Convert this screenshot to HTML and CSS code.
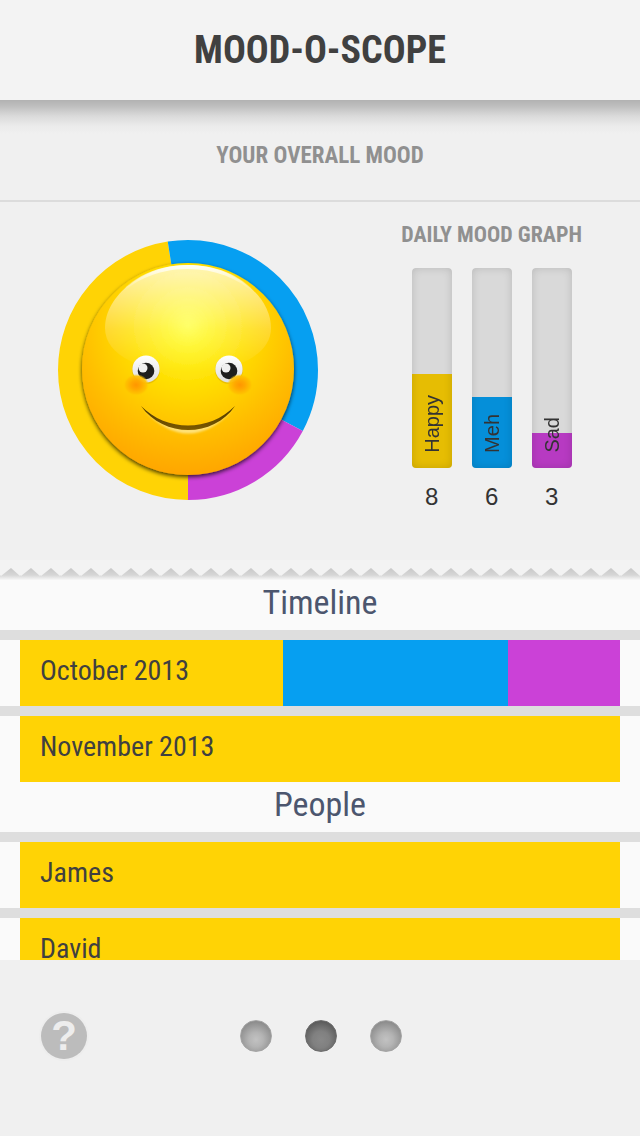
FILE: index.html
```html
<!DOCTYPE html>
<html lang="en">
<head>
  <meta charset="UTF-8">
  <meta name="viewport" content="width=device-width, initial-scale=1.0">
  <title>Mood-O-Scope</title>
  <link rel="stylesheet" href="styles.css">
</head>
<body>
  <header class="header">
    <h1>MOOD-O-SCOPE</h1>
  </header>

  <h2 class="subtitle">YOUR OVERALL MOOD</h2>

  <section class="overview">
    <svg class="mood-ring" viewBox="0 0 260 260" role="img" aria-label="Overall mood: happy">
      <defs>
        <radialGradient id="skin" gradientUnits="userSpaceOnUse" cx="130" cy="86" r="150">
          <stop offset="0" stop-color="#ffff3c"/>
          <stop offset="0.14" stop-color="#fff51e"/>
          <stop offset="0.42" stop-color="#ffdc00"/>
          <stop offset="0.72" stop-color="#ffbe00"/>
          <stop offset="1" stop-color="#ffa500"/>
        </radialGradient>
        <linearGradient id="gloss" x1="0" y1="0" x2="0" y2="1">
          <stop offset="0" stop-color="#fff" stop-opacity="0.72"/>
          <stop offset="0.6" stop-color="#fff" stop-opacity="0.2"/>
          <stop offset="1" stop-color="#fff" stop-opacity="0"/>
        </linearGradient>
        <linearGradient id="rim" x1="0" y1="0" x2="0" y2="1">
          <stop offset="0" stop-color="#fff" stop-opacity="0.9"/>
          <stop offset="0.6" stop-color="#fff" stop-opacity="0"/>
        </linearGradient>
        <radialGradient id="blush">
          <stop offset="0" stop-color="#ff9600"/>
          <stop offset="0.4" stop-color="#ffa800"/>
          <stop offset="0.8" stop-color="#ffc000" stop-opacity="0.9"/>
          <stop offset="1" stop-color="#ffcc00" stop-opacity="0"/>
        </radialGradient>
        <linearGradient id="eyeball" x1="0" y1="0" x2="0" y2="1">
          <stop offset="0" stop-color="#fff"/>
          <stop offset="1" stop-color="#dedede"/>
        </linearGradient>
        <linearGradient id="mouth" x1="0" y1="0" x2="0" y2="1">
          <stop offset="0" stop-color="#4a3500"/>
          <stop offset="1" stop-color="#7d5a00"/>
        </linearGradient>
        <filter id="shadow" x="-10%" y="-10%" width="120%" height="120%">
          <feDropShadow dx="0" dy="2" stdDeviation="2" flood-color="#000" flood-opacity="0.75"/>
        </filter>
        <filter id="soft" x="-20%" y="-50%" width="140%" height="200%">
          <feGaussianBlur stdDeviation="1"/>
        </filter>
        <g id="eye">
          <circle cy="1" r="14" fill="#b98700" opacity="0.3"/>
          <circle r="13.6" fill="url(#eyeball)"/>
          <circle cy="2" r="8.3" fill="#1e1e1e"/>
          <circle cx="-3" cy="-1" r="4.5" fill="#efefef"/>
        </g>
      </defs>

      <!-- one slice per mood, in degrees from the bottom -->
      <g fill="none" stroke-width="30" transform="rotate(90 130 130)">
        <circle cx="130" cy="130" r="115" pathLength="360" stroke="#ffd305" stroke-dasharray="171 360"/>
        <circle cx="130" cy="130" r="115" pathLength="360" stroke="#069ff1" stroke-dasharray="127 360" stroke-dashoffset="-171"/>
        <circle cx="130" cy="130" r="115" pathLength="360" stroke="#cb41d7" stroke-dasharray="62 360" stroke-dashoffset="-298"/>
      </g>

      <circle cx="130" cy="129" r="106" fill="url(#skin)" filter="url(#shadow)"/>
      <path d="M130 25 C174 25 213 55 213 88 C213 116 176 132 130 132 C84 132 47 116 47 88 C47 55 86 25 130 25Z" fill="url(#gloss)"/>
      <path d="M51 68 C66 40 96 25 130 25 C164 25 194 40 209 68 C191 42 162 29 130 29 C98 29 69 42 51 68Z" fill="url(#rim)"/>

      <use href="#eye" x="88" y="129"/>
      <use href="#eye" x="171" y="129"/>
      <ellipse cx="78" cy="145" rx="13" ry="11" fill="url(#blush)"/>
      <ellipse cx="182" cy="145" rx="13" ry="11" fill="url(#blush)"/>

      <path d="M86 170 Q130 217 175 170 Q130 208 86 170Z" fill="#ffe27a" filter="url(#soft)"/>
      <path d="M83 166 C106 198 155 198 177 166 C151 192 109 192 83 166Z" fill="url(#mouth)"/>
    </svg>

    <div class="graph">
      <h3>DAILY MOOD GRAPH</h3>
      <div class="bars">
        <div class="bar">
          <div class="track">
            <div class="fill happy" style="height: 47%"></div>
            <span class="label">Happy</span>
          </div>
          <span class="count">8</span>
        </div>
        <div class="bar">
          <div class="track">
            <div class="fill meh" style="height: 35.3%"></div>
            <span class="label">Meh</span>
          </div>
          <span class="count">6</span>
        </div>
        <div class="bar">
          <div class="track">
            <div class="fill sad" style="height: 17.6%"></div>
            <span class="label">Sad</span>
          </div>
          <span class="count">3</span>
        </div>
      </div>
    </div>
  </section>

  <main class="lists">
    <svg class="torn-edge" aria-hidden="true">
      <defs>
        <linearGradient id="tear" x1="0" y1="0" x2="0" y2="1">
          <stop offset="0.35" stop-color="#c6c6c6"/>
          <stop offset="0.75" stop-color="#d6d6d6"/>
          <stop offset="1" stop-color="#f7f7f7"/>
        </linearGradient>
        <pattern id="teeth" width="20" height="20" patternUnits="userSpaceOnUse">
          <rect width="20" height="20" fill="url(#tear)"/>
          <path d="M0 0H20V16L11 8L1 16L0 15Z" fill="#f3f3f3"/>
        </pattern>
      </defs>
      <rect width="100%" height="20" fill="url(#teeth)"/>
    </svg>

    <h2 class="list-title">Timeline</h2>
    <ul class="list">
      <li>
        <a class="row" href="#october">
          <span class="name">October 2013</span>
          <span class="part happy" style="flex-grow: 7"></span>
          <span class="part meh" style="flex-grow: 6"></span>
          <span class="part sad" style="flex-grow: 3"></span>
        </a>
      </li>
      <li>
        <a class="row" href="#november">
          <span class="name">November 2013</span>
          <span class="part happy" style="flex-grow: 1"></span>
        </a>
      </li>
    </ul>

    <h2 class="list-title">People</h2>
    <ul class="list">
      <li>
        <a class="row" href="#james">
          <span class="name">James</span>
          <span class="part happy" style="flex-grow: 1"></span>
        </a>
      </li>
      <li>
        <a class="row" href="#david">
          <span class="name">David</span>
          <span class="part happy" style="flex-grow: 1"></span>
        </a>
      </li>
    </ul>
  </main>

  <footer class="footer">
    <button class="help" type="button" aria-label="Help">?</button>
    <nav class="pager">
      <button class="dot" type="button" aria-label="Page 1"></button>
      <button class="dot active" type="button" aria-label="Page 2"></button>
      <button class="dot" type="button" aria-label="Page 3"></button>
    </nav>
  </footer>
</body>
</html>
```
FILE: styles.css
```css
* {
  box-sizing: border-box;
}
body {
  display: flex;
  flex-direction: column;
  height: 100vh;
  margin: 0;
  background: #f0f0f0;
  color: #333;
  font-family: "Roboto Condensed", "Arial Narrow", "Liberation Sans", sans-serif;
}
h1, h2, h3, ul {
  margin: 0;
  padding: 0;
}
.header {
  flex: none;
  height: 100px;
  background: #f3f3f3;
  text-align: center;
}
.header h1 {
  font-size: 38px;
  line-height: 100px;
  color: #404040;
}
.subtitle {
  flex: none;
  height: 102px;
  border-bottom: 2px solid #dcdcdc;
  background: linear-gradient(#b2b2b2, #bebebe 6px, #dadada 16px, #ebebeb 26px, #f0f0f0 34px);
  font-size: 23px;
  line-height: 112px;
  text-align: center;
  color: #909090;
}
.overview {
  display: flex;
  flex: none;
  justify-content: space-between;
  padding: 18px 58px 34px;
}
.mood-ring {
  width: 260px;
  height: 260px;
  margin-top: 20px;
}
.graph {
  display: flex;
  flex-direction: column;
  align-items: center;
}
.graph h3 {
  margin-bottom: 18px;
  font-size: 22px;
  line-height: 30px;
  color: #909090;
}
.bars {
  display: flex;
  gap: 20px;
}
.bar {
  width: 40px;
  font-family: "Liberation Sans", Arial, sans-serif;
  text-align: center;
}
.track {
  display: flex;
  position: relative;
  align-items: flex-end;
  height: 200px;
  border-radius: 4px;
  background: #d9d9d9;
  overflow: hidden;
}
.track::after {
  content: "";
  position: absolute;
  inset: 0;
  border-radius: 4px;
  box-shadow: inset 0 0 8px rgba(0, 0, 0, 0.15);
}
.fill {
  width: 100%;
}
.happy { background: #ffd305; }
.meh { background: #069ff1; }
.sad { background: #cb41d7; }
.fill.happy { background: #e6bd03; }
.fill.meh { background: #058fd9; }
.fill.sad { background: #b73ac2; }
.label {
  position: absolute;
  left: 0;
  bottom: 15px;
  width: 40px;
  font-size: 20px;
  line-height: 40px;
  text-align: left;
  writing-mode: vertical-rl;
  transform: rotate(180deg);
}
.count {
  display: block;
  font-size: 24px;
  line-height: 58px;
}
.lists {
  flex: 1;
  min-height: 0;
  background: #fafafa;
  overflow: hidden;
}
.torn-edge {
  display: block;
  width: 100%;
  height: 20px;
}
.list-title {
  font-size: 34px;
  font-weight: normal;
  line-height: 44px;
  height: 50px;
  text-align: center;
  color: #4c566e;
}
.list {
  list-style: none;
}
.list li {
  padding: 0 20px;
  border-top: 10px solid #dedede;
}
.row {
  display: flex;
  position: relative;
  height: 66px;
  color: #404040;
  text-decoration: none;
}
.name {
  position: absolute;
  left: 20px;
  font-size: 28px;
  line-height: 62px;
}
.part {
  flex-basis: 0;
}
.footer {
  display: grid;
  grid-template-columns: 1fr auto 1fr;
  flex: none;
  align-items: center;
  padding: 53px 40px 77px 41px;
}
.help {
  width: 46px;
  height: 46px;
  padding: 0;
  border: none;
  border-radius: 50%;
  background: #bcbcbc;
  box-shadow: 0 0 0 2px #ededed;
  color: #ededed;
  font: bold 42px/46px "Liberation Sans", Arial, sans-serif;
  cursor: pointer;
}
.pager {
  display: flex;
  gap: 33px;
}
.dot {
  width: 32px;
  height: 32px;
  padding: 0;
  border: 1px solid #a4a4a4;
  border-radius: 50%;
  background: radial-gradient(circle at 50% 62%, #c2c2c2, #b4b4b4 30%, #8c8c8c 75%);
  cursor: pointer;
}
.dot.active {
  border-color: #6c6c6c;
  background: radial-gradient(circle at 50% 62%, #888, #808080 35%, #5c5c5c 75%);
}
```
